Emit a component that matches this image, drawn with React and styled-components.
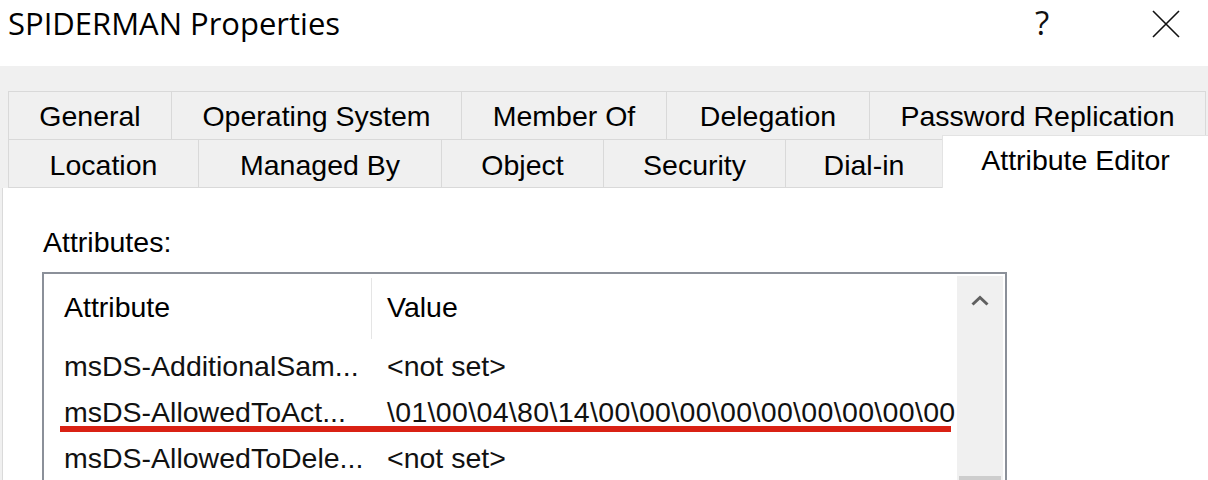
import React from 'react';
import styled, { createGlobalStyle } from 'styled-components';

const GlobalStyle = createGlobalStyle`
  html, body {
    margin: 0;
    padding: 0;
    background: #ffffff;
  }
  body {
    font-family: "Liberation Sans", Arial, sans-serif;
    overflow: hidden;
  }
`;

const Window = styled.div`
  width: 1208px;
  height: 480px;
  display: flex;
  flex-direction: column;
  background: #ffffff;
  overflow: hidden;
`;

const TitleBar = styled.div`
  flex: none;
  height: 66px;
  display: flex;
  align-items: flex-start;
`;

const Title = styled.div`
  flex: 1;
  padding: 2px 0 0 8px;
  font-family: "Open Sans", "Noto Sans", sans-serif;
  font-size: 31px;
  color: #000;
`;

const CaptionButtons = styled.div`
  display: flex;
  gap: 40px;
`;

const CaptionButton = styled.div`
  width: 84px;
  height: 48px;
  display: flex;
  align-items: ${p => (p.$top ? 'flex-start' : 'center')};
  justify-content: center;
  font-family: "Open Sans", "Noto Sans", sans-serif;
  font-size: 33px;
  color: #111;
`;

const Body = styled.div`
  flex: 1;
  display: flex;
  flex-direction: column;
  background: #f0f0f0;
  padding-top: 25px;
  min-height: 0;
`;

const TabStrip = styled.div`
  display: flex;
  flex-direction: column;
  padding-left: 8px;
`;

const TabRow = styled.div`
  display: flex;
  height: ${p => p.$h}px;
`;

const Tab = styled.div`
  box-sizing: border-box;
  flex: none;
  width: ${p => p.$w}px;
  height: 100%;
  padding-top: ${p => p.$pt}px;
  border-top: 1px solid #d9d9d9;
  border-left: 1px solid #d9d9d9;
  border-bottom: ${p => (p.$bottom ? '1px solid #d9d9d9' : 'none')};
  background: #f0f0f0;
  text-align: center;
  font-size: 28.5px;
  line-height: 32px;
  color: #000;
  white-space: nowrap;

  &:last-child {
    border-right: 1px solid #d9d9d9;
  }
`;

const ActiveTab = styled(Tab)`
  position: relative;
  z-index: 1;
  height: 53px;
  margin-top: -4px;
  background: #ffffff;
  border-color: #e3e3e3;
  border-right: none;

  &:last-child {
    border-right: none;
  }
`;

const Panel = styled.div`
  flex: 1;
  display: flex;
  flex-direction: column;
  margin-left: 2px;
  padding: 38px 0 0 39px;
  background: #ffffff;
  border-left: 1px solid #dadada;
  min-height: 0;
`;

const Label = styled.div`
  padding-left: 1px;
  font-size: 28.5px;
  line-height: 32px;
  color: #000;
`;

const ListBox = styled.div`
  position: relative;
  flex: 1;
  display: flex;
  width: 965px;
  box-sizing: border-box;
  margin-top: 14px;
  border: 2px solid #8b9099;
  border-bottom: none;
  background: #ffffff;
`;

const ListContent = styled.div`
  flex: 1;
  display: flex;
  flex-direction: column;
`;

const HeaderRow = styled.div`
  display: flex;
  align-items: stretch;
  height: 69px;
  flex: none;
`;

const HeaderCell = styled.div`
  box-sizing: border-box;
  width: ${p => (p.$w ? `${p.$w}px` : 'auto')};
  flex: ${p => (p.$w ? 'none' : '1')};
  padding-left: ${p => p.$pl}px;
  padding-bottom: 2px;
  border-right: ${p => (p.$sep ? '1px solid #e5e5e5' : 'none')};
  margin: 4px 0 4px;
  display: flex;
  align-items: center;
  font-size: 28.5px;
  color: #000;
`;

const Row = styled.div`
  display: flex;
  flex: none;
  height: 46px;
  line-height: 46px;
  font-size: 28.5px;
  color: #111;
  white-space: nowrap;
`;

const Cell = styled.div`
  box-sizing: border-box;
  width: ${p => (p.$w ? `${p.$w}px` : 'auto')};
  flex: ${p => (p.$w ? 'none' : '1')};
  padding-left: ${p => p.$pl}px;
  letter-spacing: ${p => p.$ls || 0}px;
  overflow: hidden;
`;

const Scrollbar = styled.div`
  flex: none;
  width: 46px;
  margin: 2px 2px 0 0;
  display: flex;
  flex-direction: column;
  align-items: center;
  background: #f0f0f0;
`;

const ScrollArrow = styled.div`
  height: 48px;
  display: flex;
  align-items: center;
  justify-content: center;
`;

const Thumb = styled.div`
  width: 42px;
  height: 40px;
  margin-top: 152px;
  background: #cdcdcd;
`;

const Highlight = styled.div`
  position: absolute;
  left: 16px;
  top: 152px;
  width: 891px;
  height: 6px;
  background: #d92114;
`;

const row1 = [
  { name: 'General', w: 163 },
  { name: 'Operating System', w: 290 },
  { name: 'Member Of', w: 205 },
  { name: 'Delegation', w: 203 },
  { name: 'Password Replication', w: 337 },
];

const row2 = [
  { name: 'Location', w: 190 },
  { name: 'Managed By', w: 243 },
  { name: 'Object', w: 162 },
  { name: 'Security', w: 182 },
  { name: 'Dial-in', w: 157 },
];

const attributes = [
  { name: 'msDS-AdditionalSam...', value: '<not set>' },
  { name: 'msDS-AllowedToAct...', value: '\\01\\00\\04\\80\\14\\00\\00\\00\\00\\00\\00\\00\\00\\00', wide: true },
  { name: 'msDS-AllowedToDele...', value: '<not set>' },
];

function CloseIcon() {
  return (
    <svg width="28" height="28" viewBox="0 0 28 28">
      <path d="M1 1 L27 27 M27 1 L1 27" stroke="#111" strokeWidth="1.6" fill="none" />
    </svg>
  );
}

function ChevronUp() {
  return (
    <svg width="18" height="11" viewBox="0 0 18 11">
      <path d="M1.5 9.5 L9 2.5 L16.5 9.5" stroke="#606060" strokeWidth="3" fill="none" />
    </svg>
  );
}

function App() {
  return (
    <Window>
      <GlobalStyle />
      <TitleBar>
        <Title>SPIDERMAN Properties</Title>
        <CaptionButtons>
          <CaptionButton $top>?</CaptionButton>
          <CaptionButton>
            <CloseIcon />
          </CaptionButton>
        </CaptionButtons>
      </TitleBar>
      <Body>
        <TabStrip>
          <TabRow $h={48}>
            {row1.map(t => (
              <Tab key={t.name} $w={t.w} $pt={8}>{t.name}</Tab>
            ))}
          </TabRow>
          <TabRow $h={49}>
            {row2.map(t => (
              <Tab key={t.name} $w={t.w} $pt={9} $bottom>{t.name}</Tab>
            ))}
            <ActiveTab $w={266} $pt={8}>Attribute Editor</ActiveTab>
          </TabRow>
        </TabStrip>
        <Panel>
          <Label>Attributes:</Label>
          <ListBox>
            <ListContent>
              <HeaderRow>
                <HeaderCell $w={328} $pl={20} $sep>Attribute</HeaderCell>
                <HeaderCell $pl={15}>Value</HeaderCell>
              </HeaderRow>
              {attributes.map(a => (
                <Row key={a.name}>
                  <Cell $w={328} $pl={20}>{a.name}</Cell>
                  <Cell $pl={15} $ls={a.wide ? 0.33 : 0}>{a.value}</Cell>
                </Row>
              ))}
            </ListContent>
            <Scrollbar>
              <ScrollArrow>
                <ChevronUp />
              </ScrollArrow>
              <Thumb />
            </Scrollbar>
            <Highlight />
          </ListBox>
        </Panel>
      </Body>
    </Window>
  );
}

export default App;
